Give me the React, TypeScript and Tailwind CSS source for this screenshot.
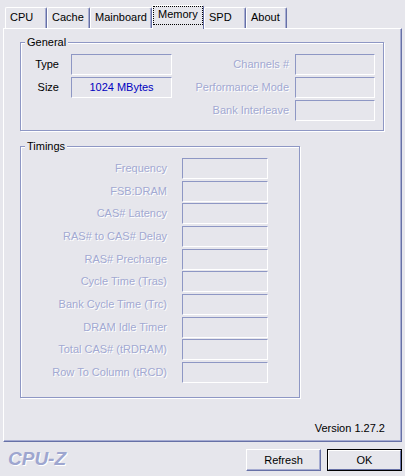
import React from 'react';

const tabs = [
  { name: 'CPU', w: 'w-[42px]' },
  { name: 'Cache', w: 'w-[43px]' },
  { name: 'Mainboard', w: 'w-[62px]' },
  { name: 'Memory', w: 'w-[52px]', active: true },
  { name: 'SPD', w: 'w-[42px]' },
  { name: 'About', w: 'w-[41px]' },
];

const timings = [
  'Frequency',
  'FSB:DRAM',
  'CAS# Latency',
  'RAS# to CAS# Delay',
  'RAS# Precharge',
  'Cycle Time (Tras)',
  'Bank Cycle Time (Trc)',
  'DRAM Idle Timer',
  'Total CAS# (tRDRAM)',
  'Row To Column (tRCD)',
];

const disabledText = 'text-[#a2a9d2] [text-shadow:1px_1px_0_#fff]';

const Field = ({ w, children }: { w: string; children?: React.ReactNode }) => (
  <div
    className={`${w} h-[21px] flex items-center justify-center border border-t-[#8e97c4] border-l-[#8e97c4] border-b-white border-r-white text-[#0000c0]`}
  >
    {children}
  </div>
);

const Group = ({ title, className, children }: { title: string; className: string; children: React.ReactNode }) => (
  <div className={`relative border border-[#8e97c4] shadow-[1px_1px_0_#fff,inset_1px_1px_0_#fff] ${className}`}>
    <span className="absolute left-[4px] -top-[7px] px-[2px] bg-[#e6e6ec] text-black leading-[13px]">{title}</span>
    {children}
  </div>
);

export default function App() {
  return (
    <div className="w-[405px] h-[476px] bg-[#e6e6ec] font-['Liberation_Sans',Arial,sans-serif] text-[11px] leading-[13px] text-black overflow-hidden select-none">
      {/* tab strip */}
      <div className="h-[28px] flex items-end pl-[5px]">
        {tabs.map((t) =>
          t.active ? (
            <div
              key={t.name}
              className={`${t.w} h-[24px] -mb-px relative z-10 bg-[#e6e6ec] border-t border-l border-white border-r border-r-[#6670a6] rounded-t-[2px]`}
            >
              <div className="w-[50px] h-[19px] border border-dotted border-black pl-[4px] pt-[1px]">{t.name}</div>
            </div>
          ) : (
            <div
              key={t.name}
              className={`${t.w} h-[21px] border-t border-l border-white border-r border-r-[#6670a6] shadow-[inset_-1px_0_0_#a6acd2] rounded-t-[2px] pl-[4px] pt-[3px]`}
            >
              {t.name}
            </div>
          )
        )}
      </div>

      {/* main panel */}
      <div className="mx-[3px] h-[414px] border border-t-white border-l-white border-r-[#6670a6] border-b-[#6670a6] shadow-[inset_-1px_-1px_0_#a6acd2] pt-[13px]">
        <Group title="General" className="ml-[16px] w-[364px] h-[89px] flex pt-[11px] pr-[8px]">
          <div className="flex flex-col gap-[2px]">
            <div className="flex items-center">
              <span className="w-[38px] text-right">Type</span>
              <div className="ml-[12px]"><Field w="w-[101px]" /></div>
            </div>
            <div className="flex items-center">
              <span className="w-[38px] text-right">Size</span>
              <div className="ml-[12px]"><Field w="w-[101px]">1024 MBytes</Field></div>
            </div>
          </div>
          <div className="ml-auto flex flex-col gap-[2px]">
            {['Channels #', 'Performance Mode', 'Bank Interleave'].map((l) => (
              <div key={l} className="flex items-center">
                <span className={`w-[100px] text-right ${disabledText}`}>{l}</span>
                <div className="ml-[6px]"><Field w="w-[80px]" /></div>
              </div>
            ))}
          </div>
        </Group>

        <Group title="Timings" className="ml-[16px] mt-[15px] w-[280px] h-[252px] pt-[11px]">
          <div className="flex flex-col gap-[1.67px]">
            {timings.map((l) => (
              <div key={l} className="flex items-center">
                <span className={`w-[146px] text-right ${disabledText}`}>{l}</span>
                <div className="ml-[15px]"><Field w="w-[86px]" /></div>
              </div>
            ))}
          </div>
        </Group>

        <div className="mt-[24px] pr-[16px] text-right">Version 1.27.2</div>
      </div>

      {/* bottom bar */}
      <div className="flex items-start pt-[7px] pr-[3px]">
        <span className="pl-[8px] text-[19px] leading-[20px] font-bold italic text-[#9ea6cf] [text-shadow:1px_1px_0_#fff]">
          CPU-Z
        </span>
        <button className="ml-auto w-[75px] h-[22px] bg-[#e6e6ec] border border-t-white border-l-white border-r-[#6670a6] border-b-[#6670a6] shadow-[inset_-1px_-1px_0_#a6acd2]">
          Refresh
        </button>
        <button className="ml-[6px] w-[75px] h-[22px] border border-black bg-[#e6e6ec]">
          <div className="w-full h-full flex items-center justify-center border border-t-white border-l-white border-r-[#6670a6] border-b-[#6670a6]">
            OK
          </div>
        </button>
      </div>
    </div>
  );
}
